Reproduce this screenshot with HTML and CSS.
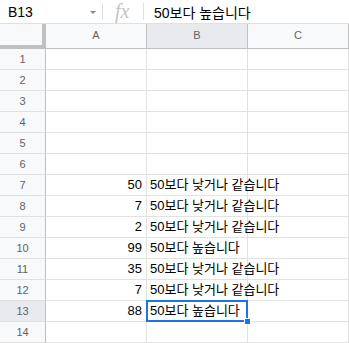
FILE: index.html
```html
<html>
    <head>
        <meta name="viewport" content="width=device-width, initial-scale=1.0">
        <title>Sheet</title>
        <link rel="stylesheet" href="styles.css">
    </head>
    <body>
        <div class="formulaBar">
            <div class="nameBox">
                <span class="ref">B13</span>
                <span class="caret"></span>
            </div>
            <div class="fx">fx</div>
            <div class="formula">50보다 높습니다</div>
        </div>
        <div class="sheet header">
            <div class="corner"></div>
            <div class="colHead">A</div>
            <div class="colHead active">B</div>
            <div class="colHead">C</div>
        </div>
        <div class="sheet" id="grid"></div>
        <script>
            let values = {
                7: [50, '50보다 낮거나 같습니다'],
                8: [7, '50보다 낮거나 같습니다'],
                9: [2, '50보다 낮거나 같습니다'],
                10: [99, '50보다 높습니다'],
                11: [35, '50보다 낮거나 같습니다'],
                12: [7, '50보다 낮거나 같습니다'],
                13: [88, '50보다 높습니다']
            };
            let grid = document.getElementById('grid');
            let html = '';
            for (let r = 1; r <= 14; r++) {
                let v = values[r] || ['', ''];
                html += '<div class="rowHead' + (r == 13 ? ' active' : '') + '">' + r + '</div>';
                html += '<div class="cell num">' + v[0] + '</div>';
                html += '<div class="cell' + (r == 13 ? ' selected' : '') + '">' + v[1] + (r == 13 ? '<span class="handle"></span>' : '') + '</div>';
                html += '<div class="cell"></div>';
            }
            grid.innerHTML = html;
        </script>
    </body>
</html>
```

FILE: styles.css
```css
html, body{
    margin: 0px;
    padding: 0px;
    background: white;
    font-family: 'Liberation Sans', 'Noto Sans CJK KR', sans-serif;
    overflow: hidden;
}
.formulaBar{
    display: flex;
    align-items: center;
    height: 23px;
    border-bottom: 1px solid #e0e0e0;
    color: #000;
}
.nameBox{
    display: flex;
    align-items: center;
    width: 103px;
    height: 17px;
    box-sizing: border-box;
    padding-left: 8px;
    padding-right: 6px;
    border-right: 1px solid #e0e0e0;
}
.ref{
    flex: 1;
    font-size: 14px;
}
.caret{
    width: 0;
    height: 0;
    border-left: 3px solid transparent;
    border-right: 3px solid transparent;
    border-top: 3px solid #888;
    margin-top: 2px;
}
.fx{
    width: 41px;
    height: 17px;
    box-sizing: border-box;
    border-right: 1px solid #e0e0e0;
    font-family: 'Liberation Serif', serif;
    font-style: italic;
    font-size: 20px;
    line-height: 16px;
    color: #c4c4c4;
    padding-left: 12px;
}
.formula{
    padding-left: 10px;
    font-size: 14px;
}
.sheet{
    display: grid;
    grid-template-columns: 46px 101px 101px 101px;
    grid-auto-rows: 21px;
}
.sheet.header{
    grid-auto-rows: 25px;
}
.corner{
    box-sizing: border-box;
    background: #f8f9fa;
    border-right: 4px solid #c0c0c0;
    border-bottom: 4px solid #c0c0c0;
}
.colHead{
    box-sizing: border-box;
    background: #f8f9fa;
    border-right: 1px solid #c0c0c0;
    border-bottom: 1px solid #c0c0c0;
    color: #5f6368;
    font-size: 11px;
    text-align: center;
    line-height: 22px;
}
.colHead.active, .rowHead.active{
    background: #e8eaed;
}
.rowHead{
    box-sizing: border-box;
    background: #f8f9fa;
    border-right: 1px solid #c0c0c0;
    border-bottom: 1px solid #e0e0e0;
    color: #5f6368;
    font-size: 11px;
    text-align: center;
    line-height: 20px;
}
.cell{
    position: relative;
    box-sizing: border-box;
    border-right: 1px solid #e2e2e2;
    border-bottom: 1px solid #e2e2e2;
    font-size: 13px;
    line-height: 20px;
    padding: 0px 3px;
    white-space: nowrap;
    color: #000;
}
.num{
    text-align: right;
    padding-right: 4px;
}
.selected::after{
    content: '';
    position: absolute;
    top: -1px;
    left: -1px;
    right: -1px;
    bottom: -1px;
    border: 2px solid #1a73e8;
}
.handle{
    position: absolute;
    right: -4px;
    bottom: -4px;
    width: 5px;
    height: 5px;
    background: #1a73e8;
    border: 1px solid white;
    z-index: 2;
}
```
